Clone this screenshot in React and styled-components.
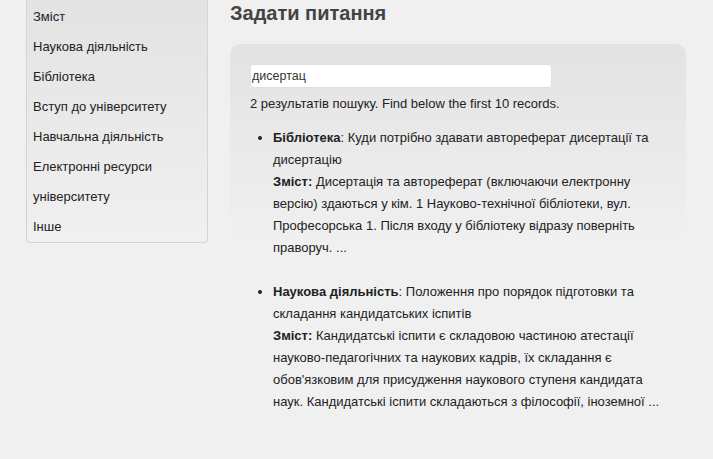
import styled, { createGlobalStyle } from 'styled-components';

const GlobalStyle = createGlobalStyle`
  html, body {
    margin: 0;
    padding: 0;
    background: #f0f0f0;
    font-family: "Liberation Sans", Arial, sans-serif;
    color: #222;
  }
`;

const Page = styled.div`
  display: flex;
  align-items: flex-start;
  gap: 22px;
  padding-left: 26px;
  min-height: 459px;
  box-sizing: border-box;
`;

const Sidebar = styled.nav`
  width: 182px;
  box-sizing: border-box;
  padding: 2px 0 0;
  border: 1px solid #d4d4d4;
  border-top: none;
  border-radius: 0 0 4px 4px;
  background: linear-gradient(#e3e3e3, #f0f0f0);
`;

const NavItem = styled.a`
  display: block;
  height: 30px;
  line-height: 30px;
  padding-left: 6px;
  font-size: 13px;
  color: #222;
  text-decoration: none;
`;

const Main = styled.main`
  width: 456px;
`;

const Title = styled.h1`
  margin: 0;
  padding-top: 1px;
  height: 43px;
  line-height: 24px;
  font-size: 20px;
  font-weight: bold;
  color: #444;
`;

const Panel = styled.section`
  padding: 20px 20px 20px;
  border-radius: 10px;
  background: linear-gradient(#e3e3e3, #f0f0f0 200px);
`;

const SearchInput = styled.input`
  display: block;
  width: 302px;
  height: 24px;
  box-sizing: border-box;
  margin: 0;
  padding: 0 1px;
  border: 1px solid #e0e0e0;
  border-radius: 3px;
  background: #fff;
  font-family: inherit;
  font-size: 12.5px;
  color: #333;
  outline: none;
`;

const Summary = styled.p`
  margin: 7px 0 14px;
  font-size: 13px;
  line-height: 18px;
  color: #222;
`;

const Results = styled.ul`
  margin: 0;
  padding-left: 23px;
`;

const Result = styled.li`
  font-size: 13px;
  line-height: 22px;
  color: #222;
  margin-bottom: 22px;
`;

const results = [
  {
    section: 'Бібліотека',
    title: 'Куди потрібно здавати автореферат дисертації та дисертацію',
    text:
      'Дисертація та автореферат (включаючи електронну версію) здаються у кім. 1 Науково-технічної бібліотеки, вул. Професорська 1. Після входу у бібліотеку відразу поверніть праворуч. ...',
  },
  {
    section: 'Наукова діяльність',
    title: 'Положення про порядок підготовки та складання кандидатських іспитів',
    text:
      "Кандидатські іспити є складовою частиною атестації науково-педагогічних та наукових кадрів, їх складання є обов'язковим для присудження наукового ступеня кандидата наук. Кандидатські іспити складаються з філософії, іноземної ...",
  },
];

const nav = [
  'Зміст',
  'Наукова діяльність',
  'Бібліотека',
  'Вступ до університету',
  'Навчальна діяльність',
  'Електронні ресурси',
  'університету',
  'Інше',
];

export default function App() {
  return (
    <>
      <GlobalStyle />
      <Page>
        <Sidebar>
          {nav.map((item) => (
            <NavItem key={item} href="#">
              {item}
            </NavItem>
          ))}
        </Sidebar>
        <Main>
          <Title>Задати питання</Title>
          <Panel>
            <SearchInput defaultValue="дисертац" />
            <Summary>2 результатів пошуку. Find below the first 10 records.</Summary>
            <Results>
              {results.map((r) => (
                <Result key={r.section}>
                  <b>{r.section}</b>: {r.title}
                  <br />
                  <b>Зміст:</b> {r.text}
                </Result>
              ))}
            </Results>
          </Panel>
        </Main>
      </Page>
    </>
  );
}
